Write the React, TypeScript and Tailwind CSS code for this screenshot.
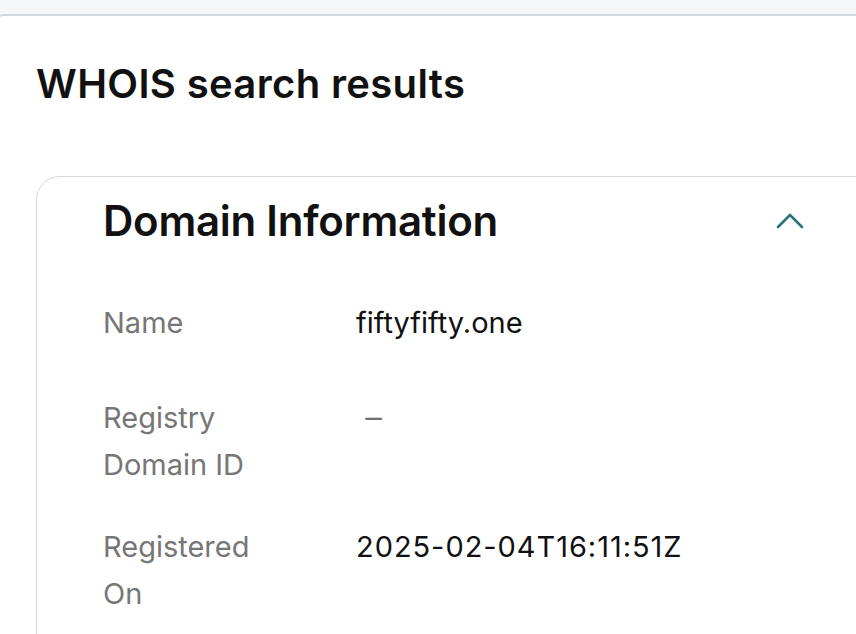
import { ChevronUp } from "lucide-react";

const rows = [
  { label: ["Name"], value: "fiftyfifty.one", mt: "mt-[54px]", valueClass: "text-[#111111]" },
  { label: ["Registry", "Domain ID"], value: "–", mt: "mt-[48px]", valueClass: "pl-[8px] scale-x-[1.15] origin-left text-[#6f6f6f]" },
  {
    label: ["Registered", "On"],
    value: "2025-02-04T16:11:51Z",
    mt: "mt-[35px]",
    valueClass: "tracking-[0.95px] text-[#111111]",
  },
];

export default function App() {
  return (
    <div
      className="h-[634px] w-[856px] overflow-hidden bg-[#f5f6f8] pt-[14px]"
      style={{ fontFamily: "Inter, 'Noto Sans', sans-serif" }}
    >
      <div className="-ml-[4px] h-full rounded-tl-[8px] border-t-2 border-l border-[#d3d9df] bg-white pl-[39px] pt-[44px]">
        <h1 className="text-[40px] leading-[48px] font-semibold tracking-[0.35px] text-[#111111]">
          WHOIS search results
        </h1>

        <div className="mt-[68px] w-[850px] rounded-t-[24px] border border-[#d3d9df] pl-[66px] pr-[71px] pt-[20px] pb-10">
          <div className="flex items-center justify-between">
            <h2 className="text-[42px] leading-[48px] font-semibold tracking-[-0.25px] text-[#111111]">
              Domain Information
            </h2>
            <ChevronUp className="h-[48px] w-[48px] text-[#2b737a]" strokeWidth={1.3} />
          </div>

          {rows.map((row) => (
            <div key={row.value} className={`flex ${row.mt} text-[29px] leading-[47px]`}>
              <div className="w-[253px] shrink-0 text-[#767676]">
                {row.label.map((l) => (
                  <div key={l}>{l}</div>
                ))}
              </div>
              <div className={row.valueClass}>{row.value}</div>
            </div>
          ))}
        </div>
      </div>
    </div>
  );
}
